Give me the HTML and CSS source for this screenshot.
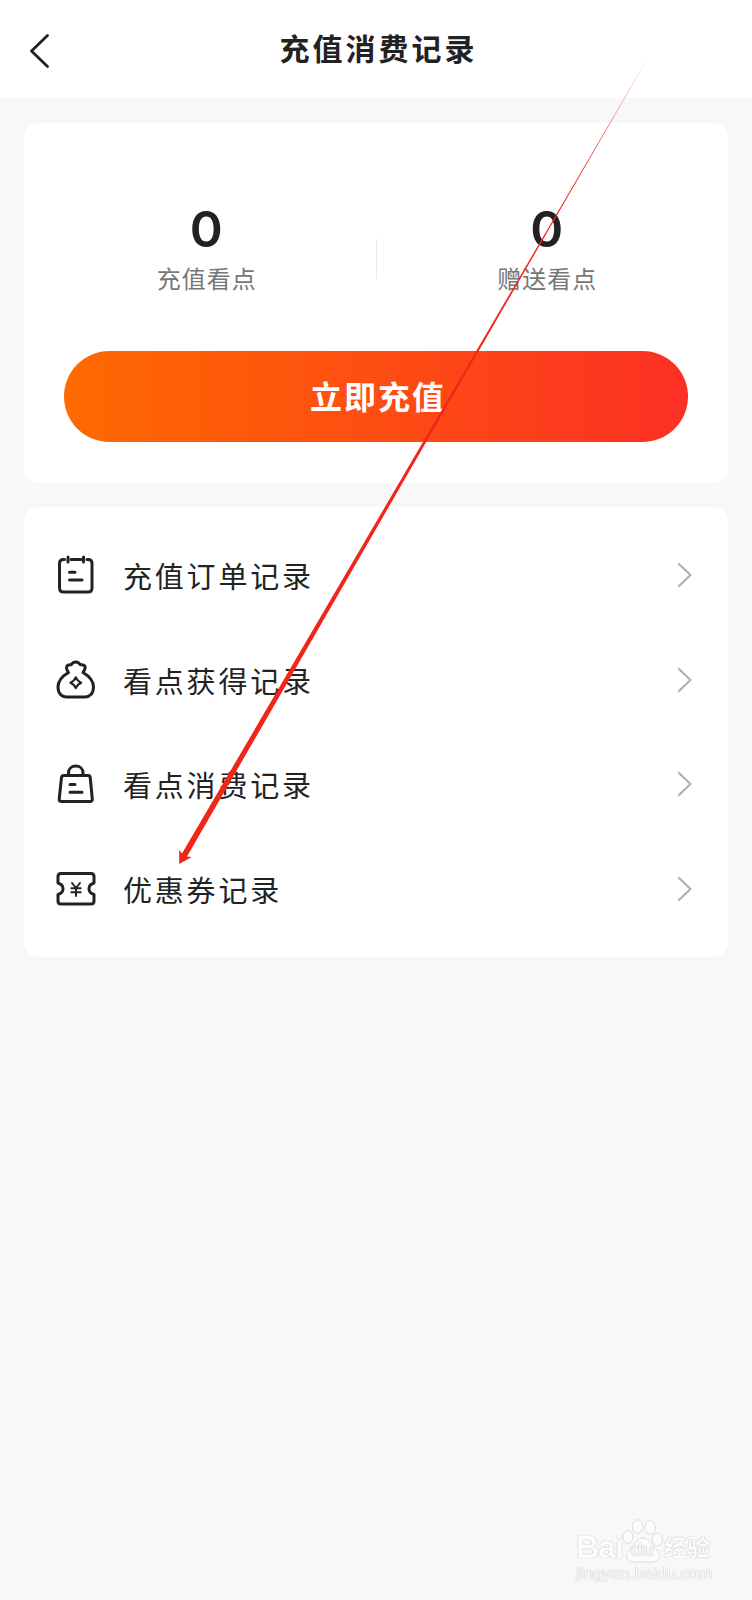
FILE: index.html
```
<!DOCTYPE html>
<html lang="zh-CN">

<head>
    <meta charset="utf-8">
    <meta name="viewport" content="width=device-width, initial-scale=1.0">
    <title>充值消费记录</title>
    <link rel="stylesheet" href="styles.css">
</head>

<body>
    <header class="topbar">
        <svg class="back" width="24" height="38" viewBox="0 0 24 38">
            <path d="M19.5 3.5 L3.5 19 L19.5 34.5" />
        </svg>
        <h1>充值消费记录</h1>
    </header>

    <main>
        <section class="card balance">
            <div class="tal">
                <div class="konto">
                    <p class="antal">0</p>
                    <p class="label">充值看点</p>
                </div>
                <div class="streg"></div>
                <div class="konto">
                    <p class="antal">0</p>
                    <p class="label">赠送看点</p>
                </div>
            </div>
            <button class="recharge">立即充值</button>
        </section>

        <nav class="card menu">
            <a class="row">
                <svg class="icon" viewBox="0 0 42 42">
                    <path d="M9.5 5.5 H8.5 Q4.5 5.5 4.5 9.5 V34 Q4.5 38 8.5 38 H33 Q37 38 37 34 V9.5 Q37 5.5 33 5.5 H32 M16 5.5 H26" />
                    <path d="M13 3 V8 M28.5 3 V8 M14.5 18.3 H20 M14.5 26 H27" />
                </svg>
                <span>充值订单记录</span>
                <svg class="chevron" viewBox="0 0 16 26">
                    <path d="M2 2 L13.5 13 L2 24" />
                </svg>
            </a>
            <a class="row">
                <svg class="icon" viewBox="0 0 42 42">
                    <path d="M13.5 13.5 C12 11 10.5 9.5 12 7 C13 5.3 15 6 16.5 5.5 C18 2 23.5 2 25 5.5 C27 6 28.5 5.3 29.8 7 C31 9.5 29.5 11 28 13.5 C34 17 38.5 22 38.5 28 C38.5 34.5 34.5 38 30 38 H11.5 C7 38 3 34.5 3 28 C3 22 7.5 17 13.5 13.5 Z" />
                    <path class="thin" d="M20.8 18.2 Q22.3 22.2 26.3 23.7 Q22.3 25.2 20.8 29.2 Q19.3 25.2 15.3 23.7 Q19.3 22.2 20.8 18.2 Z" />
                </svg>
                <span>看点获得记录</span>
                <svg class="chevron" viewBox="0 0 16 26">
                    <path d="M2 2 L13.5 13 L2 24" />
                </svg>
            </a>
            <a class="row">
                <svg class="icon" viewBox="0 0 42 42">
                    <path d="M9 12.5 H33 Q35 12.5 35.2 14.5 L37.3 36 Q37.5 38.5 35 38.5 H6.5 Q4 38.5 4.2 36 L6.5 14.5 Q6.7 12.5 9 12.5 Z" />
                    <path d="M13.5 12 V10 C13.5 .7 28 .7 28 10 V12 M15 21.5 H20 M15 29.3 H27" />
                </svg>
                <span>看点消费记录</span>
                <svg class="chevron" viewBox="0 0 16 26">
                    <path d="M2 2 L13.5 13 L2 24" />
                </svg>
            </a>
            <a class="row">
                <svg class="icon" viewBox="0 0 42 42">
                    <path d="M6 5.5 H36 Q39 5.5 39 8.5 V15 C32.3 17 32.3 24.5 39 26.5 V33 Q39 36 36 36 H6 Q3 36 3 33 V26.5 C9.7 24.5 9.7 17 3 15 V8.5 Q3 5.5 6 5.5 Z" />
                    <path class="thin" d="M17 15 L21 20 L25 15 M21 20 V28 M16.3 20.3 H25.7 M16.3 24.3 H25.7" />
                </svg>
                <span>优惠券记录</span>
                <svg class="chevron" viewBox="0 0 16 26">
                    <path d="M2 2 L13.5 13 L2 24" />
                </svg>
            </a>
        </nav>
    </main>

    <!-- rød pil hen over siden -->
    <svg class="arrow" width="752" height="1600" viewBox="0 0 752 1600">
        <defs>
            <linearGradient id="fade" gradientUnits="userSpaceOnUse" x1="649" y1="57" x2="179" y2="864">
                <stop offset="0" stop-color="#f0261b" stop-opacity="0.8" />
                <stop offset="0.15" stop-color="#f0261b" />
            </linearGradient>
        </defs>
        <path fill="url(#fade)" d="M649 56 L187 856.5 L191.8 857 L179.2 864 L179.2 850 L182 853.5 Z" />
    </svg>

    <div class="watermark">
        <div class="brand">
            <span class="bai">Bai</span>
            <span class="paw">
                <svg width="42" height="44" viewBox="0 0 42 44">
                    <ellipse cx="6" cy="18" rx="5" ry="6.5" />
                    <ellipse cx="15.5" cy="7.5" rx="5.3" ry="6.8" />
                    <ellipse cx="28" cy="8.5" rx="5.3" ry="6.8" />
                    <ellipse cx="35.5" cy="20.5" rx="5.3" ry="6.5" />
                    <path d="M21 19 C27 19 29 26 34 30 C41 36 37 43 30 43 H12 C4 43 2 36 8 30 C13 26 15 19 21 19 Z" />
                </svg>
                <b>du</b>
            </span>
            <span class="jingyan">经验</span>
        </div>
        <p>jingyan.baidu.com</p>
    </div>
</body>

</html>
```

FILE: styles.css
```
* {
    box-sizing: border-box;
    margin: 0;
    padding: 0;
}

body {
    position: relative;
    min-height: 1600px;
    background-color: #f8f8f8;
    color: #222;
    font-family: "Noto Sans CJK SC", sans-serif;
}

.topbar {
    display: grid;
    grid-template-columns: 80px 1fr 80px;
    height: 98px;
    background-color: white;
}

.back {
    margin: 32px 0 0 28px;
}

svg {
    fill: none;
    stroke: #222;
    stroke-width: 2.8;
    stroke-linecap: round;
    stroke-linejoin: round;
}

h1 {
    padding-left: 5px;
    line-height: 95px;
    text-align: center;
    font-size: 30px;
    font-weight: 700;
    letter-spacing: 3px;
}

main {
    padding: 25px 24px 0;
}

.card {
    background-color: white;
    border-radius: 15px;
}

.balance {
    height: 360px;
    padding: 78px 40px 0;
}

.tal {
    display: flex;
    align-items: flex-start;
    height: 150px;
    margin: 0 -28px;
}

.konto {
    flex: 1;
    text-align: center;
}

.antal {
    height: 60px;
    padding-left: 1px;
    line-height: 57px;
    font-family: Inter, sans-serif;
    font-size: 50px;
    font-weight: 600;
}

.label {
    line-height: 34px;
    padding-left: 2px;
    color: #777;
    font-size: 24px;
    letter-spacing: 1px;
}

.streg {
    width: 1px;
    height: 40px;
    margin-top: 38px;
    background-color: #e8e8e8;
}

.recharge {
    display: block;
    width: 100%;
    height: 91px;
    padding: 0 0 4px 4px;
    border: none;
    border-radius: 46px;
    background: linear-gradient(90deg, #ff6a00, #fc3024);
    color: white;
    font-family: inherit;
    font-size: 32px;
    font-weight: 700;
    letter-spacing: 2px;
}

.menu {
    height: 450px;
    margin-top: 24px;
    padding: 16px 33px;
}

.row {
    display: flex;
    align-items: center;
    height: 104.6px;
}

.icon {
    width: 42px;
    height: 42px;
    margin-left: -2px;
    stroke-width: 3;
}

.icon .thin {
    stroke-width: 2;
}

.row span {
    flex: 1;
    margin-left: 26px;
    font-size: 29px;
    letter-spacing: 2.8px;
}

.chevron {
    width: 16px;
    height: 26px;
    margin-right: 2px;
    stroke: #b0b0b0;
    stroke-width: 2.2;
}

.arrow {
    position: absolute;
    left: 0;
    top: 0;
    stroke: none;
    pointer-events: none;
}

.watermark {
    position: absolute;
    left: 576px;
    top: 1518px;
    width: 140px;
    color: #fcfcfc;
    font-family: "Liberation Sans", "Noto Sans CJK SC", sans-serif;
    text-shadow: 0 0 1px #bbb, 0 0 1px #ccc;
}

.brand {
    display: flex;
    align-items: flex-end;
    height: 45px;
}

.bai {
    width: 46px;
    font-size: 32px;
    font-weight: 700;
    line-height: 32px;
    letter-spacing: -1px;
}

.paw {
    position: relative;
    width: 42px;
    height: 44px;
}

.paw svg {
    display: block;
    fill: #fcfcfc;
    stroke: #dcdcdc;
    stroke-width: 1;
}

.paw b {
    position: absolute;
    left: 9px;
    bottom: 3px;
    color: #f4f4f4;
    font-size: 19px;
    line-height: 20px;
}

.jingyan {
    font-size: 23px;
    font-weight: 700;
    line-height: 29px;
}

.watermark p {
    margin-top: 0;
    font-size: 16.5px;
    line-height: 20px;
    letter-spacing: 0.2px;
    white-space: nowrap;
}
```
